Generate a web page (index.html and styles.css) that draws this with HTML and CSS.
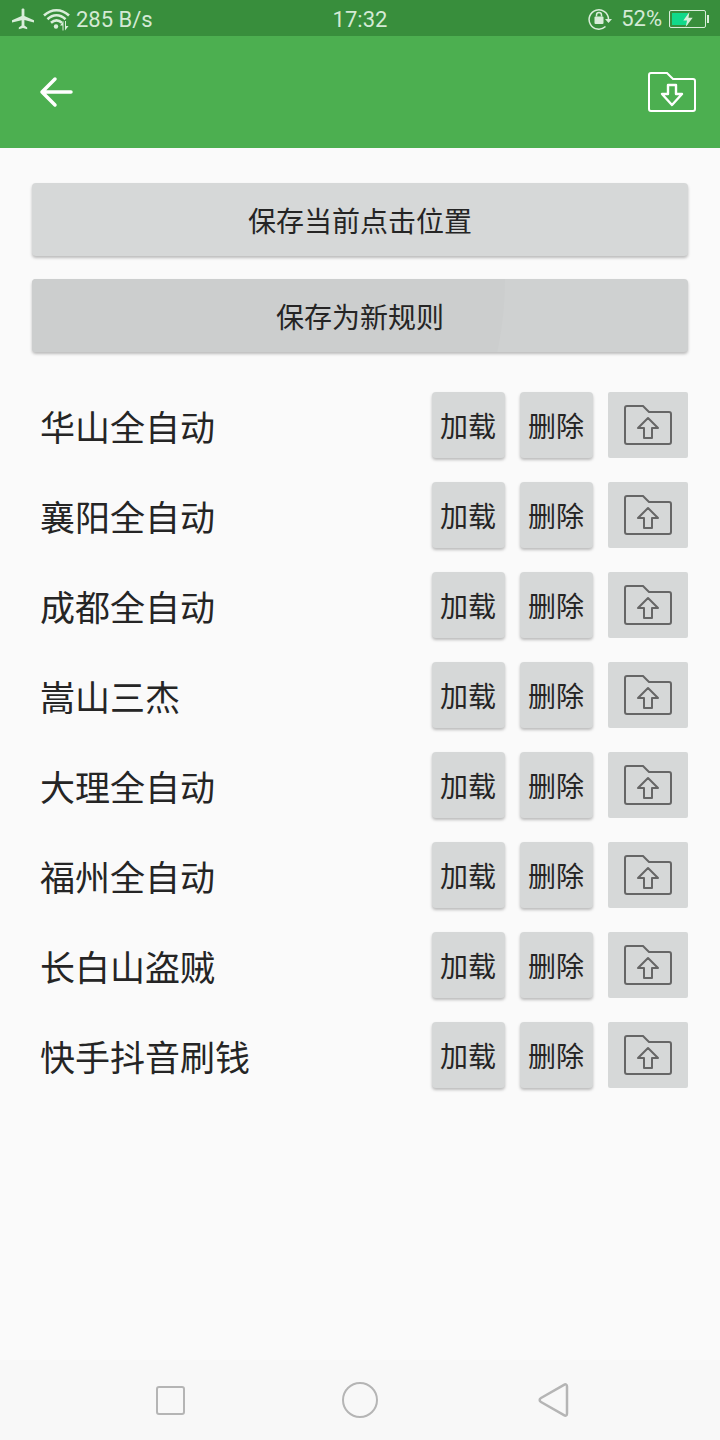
FILE: index.html
```html
<!DOCTYPE html>
<html lang="zh-CN">
<head>
  <meta charset="UTF-8">
  <title>规则</title>
  <link rel="stylesheet" href="styles.css">
</head>
<body>
  <div class="screen">
    <div class="statusbar">
      <div class="status-left">
        <svg class="ic-plane" width="24" height="24" viewBox="0 0 24 24"><path d="M10.600 2.500c0-1.200 2.800-1.200 2.800 0V9l9.600 4.200v2.200l-9.600-2.300v5.400l2.800 2v1.700L12 21l-4.200 1.300v-1.700l2.800-2v-5.400L1 15.400v-2.200L10.600 9z"/></svg>
        <svg class="ic-wifi" width="30" height="24" viewBox="0 0 30 24">
          <path d="M2 8.500C9.500 1.500 19.500 1.500 27 8.500M5.500 12.200C11 7 18 7 23.500 12.200M9 15.800c3.500-3 7.500-3 11 0" fill="none" stroke-width="2.600"/>
          <circle cx="14" cy="19.500" r="2.200"/>
          <path d="M20.500 23.500v-5h-2.500l3.500-4.500v9.500zM23 14v9.500l3.500-4.500H24v-5z"/>
        </svg>
        <span class="status-text">285 B/s</span>
      </div>
      <span class="status-time">17:32</span>
      <div class="status-right">
        <svg class="ic-rotate" width="26" height="24" viewBox="0 0 26 24">
          <path d="M20.500 12a9.700 9.700 0 1 0-3 7.500" fill="none" stroke-width="1.500"/>
          <path d="M17 12h7l-3.500 4z"/>
          <rect x="6.500" y="9.500" width="9" height="7.500" rx="1"/>
          <path d="M8.500 9.500V8a2.500 2.500 0 0 1 5 0v1.500" fill="none" stroke-width="1.500"/>
        </svg>
        <span class="status-pct">52%</span>
        <div class="battery">
          <div class="battery-body">
            <div class="battery-level"></div>
            <svg class="battery-bolt" width="12" height="15" viewBox="0 0 12 16"><path d="M7.500 0L1 9h4l-1.500 7L11 6H6.500z"/></svg>
          </div>
          <div class="battery-tip"></div>
        </div>
      </div>
    </div>

    <div class="toolbar">
      <svg class="ic-back" width="34" height="34" viewBox="0 0 34 34"><path d="M32 17H3M16 4L3 17l13 13" fill="none" stroke-width="3.500" stroke-linecap="round" stroke-linejoin="round"/></svg>
      <svg class="ic-save" width="48" height="40" viewBox="0 0 48 40">
        <path d="M1 3a2 2 0 0 1 2-2h16l6 6h20a2 2 0 0 1 2 2v28a2 2 0 0 1-2 2H3a2 2 0 0 1-2-2z" fill="none" stroke-width="2"/>
        <path d="M20 13h8v9h6L24 33 14 22h6z" fill="none" stroke-width="2.400" stroke-linejoin="round"/>
      </svg>
    </div>

    <div class="content">
      <div class="wide-btn">保存当前点击位置</div>
      <div class="wide-btn wide-btn-pressed"><span>保存为新规则</span></div>

      <ul class="rules" id="rules">
        <li class="rule">
          <span class="rule-name">华山全自动</span>
          <div class="small-btn">加载</div>
          <div class="small-btn">删除</div>
          <div class="export-btn">
            <svg width="48" height="40" viewBox="0 0 48 40"><path d="M1 3a2 2 0 0 1 2-2h16l6 6h20a2 2 0 0 1 2 2v28a2 2 0 0 1-2 2H3a2 2 0 0 1-2-2z"/><path d="M20 33h8v-10h6L24 13 14 23h6z" stroke-linejoin="round"/></svg>
          </div>
        </li>
        <li class="rule">
          <span class="rule-name">襄阳全自动</span>
          <div class="small-btn">加载</div>
          <div class="small-btn">删除</div>
          <div class="export-btn">
            <svg width="48" height="40" viewBox="0 0 48 40"><path d="M1 3a2 2 0 0 1 2-2h16l6 6h20a2 2 0 0 1 2 2v28a2 2 0 0 1-2 2H3a2 2 0 0 1-2-2z"/><path d="M20 33h8v-10h6L24 13 14 23h6z" stroke-linejoin="round"/></svg>
          </div>
        </li>
        <li class="rule">
          <span class="rule-name">成都全自动</span>
          <div class="small-btn">加载</div>
          <div class="small-btn">删除</div>
          <div class="export-btn">
            <svg width="48" height="40" viewBox="0 0 48 40"><path d="M1 3a2 2 0 0 1 2-2h16l6 6h20a2 2 0 0 1 2 2v28a2 2 0 0 1-2 2H3a2 2 0 0 1-2-2z"/><path d="M20 33h8v-10h6L24 13 14 23h6z" stroke-linejoin="round"/></svg>
          </div>
        </li>
        <li class="rule">
          <span class="rule-name">嵩山三杰</span>
          <div class="small-btn">加载</div>
          <div class="small-btn">删除</div>
          <div class="export-btn">
            <svg width="48" height="40" viewBox="0 0 48 40"><path d="M1 3a2 2 0 0 1 2-2h16l6 6h20a2 2 0 0 1 2 2v28a2 2 0 0 1-2 2H3a2 2 0 0 1-2-2z"/><path d="M20 33h8v-10h6L24 13 14 23h6z" stroke-linejoin="round"/></svg>
          </div>
        </li>
        <li class="rule">
          <span class="rule-name">大理全自动</span>
          <div class="small-btn">加载</div>
          <div class="small-btn">删除</div>
          <div class="export-btn">
            <svg width="48" height="40" viewBox="0 0 48 40"><path d="M1 3a2 2 0 0 1 2-2h16l6 6h20a2 2 0 0 1 2 2v28a2 2 0 0 1-2 2H3a2 2 0 0 1-2-2z"/><path d="M20 33h8v-10h6L24 13 14 23h6z" stroke-linejoin="round"/></svg>
          </div>
        </li>
        <li class="rule">
          <span class="rule-name">福州全自动</span>
          <div class="small-btn">加载</div>
          <div class="small-btn">删除</div>
          <div class="export-btn">
            <svg width="48" height="40" viewBox="0 0 48 40"><path d="M1 3a2 2 0 0 1 2-2h16l6 6h20a2 2 0 0 1 2 2v28a2 2 0 0 1-2 2H3a2 2 0 0 1-2-2z"/><path d="M20 33h8v-10h6L24 13 14 23h6z" stroke-linejoin="round"/></svg>
          </div>
        </li>
        <li class="rule">
          <span class="rule-name">长白山盗贼</span>
          <div class="small-btn">加载</div>
          <div class="small-btn">删除</div>
          <div class="export-btn">
            <svg width="48" height="40" viewBox="0 0 48 40"><path d="M1 3a2 2 0 0 1 2-2h16l6 6h20a2 2 0 0 1 2 2v28a2 2 0 0 1-2 2H3a2 2 0 0 1-2-2z"/><path d="M20 33h8v-10h6L24 13 14 23h6z" stroke-linejoin="round"/></svg>
          </div>
        </li>
        <li class="rule">
          <span class="rule-name">快手抖音刷钱</span>
          <div class="small-btn">加载</div>
          <div class="small-btn">删除</div>
          <div class="export-btn">
            <svg width="48" height="40" viewBox="0 0 48 40"><path d="M1 3a2 2 0 0 1 2-2h16l6 6h20a2 2 0 0 1 2 2v28a2 2 0 0 1-2 2H3a2 2 0 0 1-2-2z"/><path d="M20 33h8v-10h6L24 13 14 23h6z" stroke-linejoin="round"/></svg>
          </div>
        </li>
      </ul>
    </div>

    <div class="navbar">
      <div class="nav-square"></div>
      <div class="nav-circle"></div>
      <svg class="nav-back" width="32" height="36" viewBox="0 0 32 36"><path d="M30 4.500c0-2-1.300-2.700-3-1.700L4 16c-1.800 1-1.800 3 0 4l23 13.200c1.700 1 3 .3 3-1.700z" fill="none" stroke-width="2.500" stroke-linejoin="round"/></svg>
    </div>
  </div>
</body>
</html>
```
FILE: styles.css
```css
* {
  margin: 0;
  padding: 0;
  box-sizing: border-box;
}

body {
  font-family: Roboto, "Noto Sans CJK SC", sans-serif;
  background: #fafafa;
  color: #252525;
}

.screen {
  width: 720px;
  height: 1440px;
  display: flex;
  flex-direction: column;
  overflow: hidden;
}

/* status bar */
.statusbar {
  height: 36px;
  background: #388e3c;
  color: #d4ead5;
  display: grid;
  grid-template-columns: 1fr auto 1fr;
  align-items: center;
  padding: 0 11px;
}

.statusbar svg {
  fill: #d9edda;
  stroke: #d9edda;
  stroke-width: 0;
  display: block;
}

.status-left,
.status-right {
  display: flex;
  align-items: center;
}

.status-right {
  justify-content: flex-end;
}

.status-text,
.status-time,
.status-pct {
  font-size: 22px;
  line-height: 36px;
}

.status-text,
.status-time {
  padding-top: 2px;
}

.ic-wifi {
  margin-left: 7px;
  margin-right: 4px;
}

.ic-rotate {
  margin-right: 7px;
}

.battery {
  display: flex;
  align-items: center;
  margin-left: 7px;
}

.battery-body {
  position: relative;
  width: 37px;
  height: 18px;
  border: 1px solid #d9edda;
  border-radius: 2px;
  padding: 2px;
}

.battery-level {
  width: 52%;
  height: 100%;
  background: #12d98a;
}

.battery-bolt {
  position: absolute;
  left: 12px;
  top: 1px;
}

.battery-tip {
  width: 2px;
  height: 8px;
  margin-left: 1px;
  background: #d9edda;
}

/* toolbar */
.toolbar {
  height: 112px;
  background: #4caf50;
  display: flex;
  align-items: center;
  justify-content: space-between;
  padding: 0 24px 0 39px;
}

.toolbar svg {
  stroke: #fff;
  display: block;
}

.ic-save {
  margin-bottom: 1px;
}

/* main area */
.content {
  flex: 1;
  padding: 35px 32px 0;
}

.wide-btn {
  height: 73px;
  margin-bottom: 23px;
  background: #d6d8d8;
  border-radius: 4px;
  box-shadow: 0 2px 3px rgba(0, 0, 0, 0.25);
  font-size: 28px;
  display: flex;
  align-items: center;
  justify-content: center;
  position: relative;
  overflow: hidden;
}

.wide-btn span {
  position: relative;
}

.wide-btn-pressed {
  background: #cfd1d1;
}

/* ripple still spreading from the press */
.wide-btn-pressed::before {
  content: '';
  position: absolute;
  right: 183px;
  top: -350px;
  width: 700px;
  height: 700px;
  border-radius: 50%;
  background: #cccece;
}

.rules {
  list-style: none;
  margin-top: 40px;
}

.rule {
  height: 66px;
  margin-bottom: 24px;
  display: flex;
  align-items: center;
}

.rule-name {
  flex: 1;
  font-size: 35px;
  padding-left: 8px;
}

.small-btn {
  width: 73px;
  height: 66px;
  margin-right: 15px;
  background: #d6d8d8;
  border-radius: 4px;
  box-shadow: 0 2px 3px rgba(0, 0, 0, 0.25);
  font-size: 28px;
  display: flex;
  align-items: center;
  justify-content: center;
  padding-bottom: 1px;
  padding-right: 1px;
}

.export-btn {
  width: 80px;
  height: 66px;
  background: #d6d8d8;
  display: flex;
  align-items: center;
  justify-content: center;
  border-radius: 2px;
}

.export-btn svg {
  fill: none;
  stroke: #666;
  stroke-width: 2;
  display: block;
}

/* navigation bar */
.navbar {
  height: 80px;
  background: #f8f8f8;
  display: flex;
  align-items: center;
  padding-left: 156px;
}

.nav-square {
  width: 29px;
  height: 29px;
  border: 2px solid #b5b5b5;
  border-radius: 3px;
}

.nav-circle {
  width: 36px;
  height: 36px;
  margin-left: 157px;
  border: 2px solid #b5b5b5;
  border-radius: 50%;
}

.nav-back {
  margin-left: 159px;
  stroke: #b5b5b5;
  display: block;
}
```
